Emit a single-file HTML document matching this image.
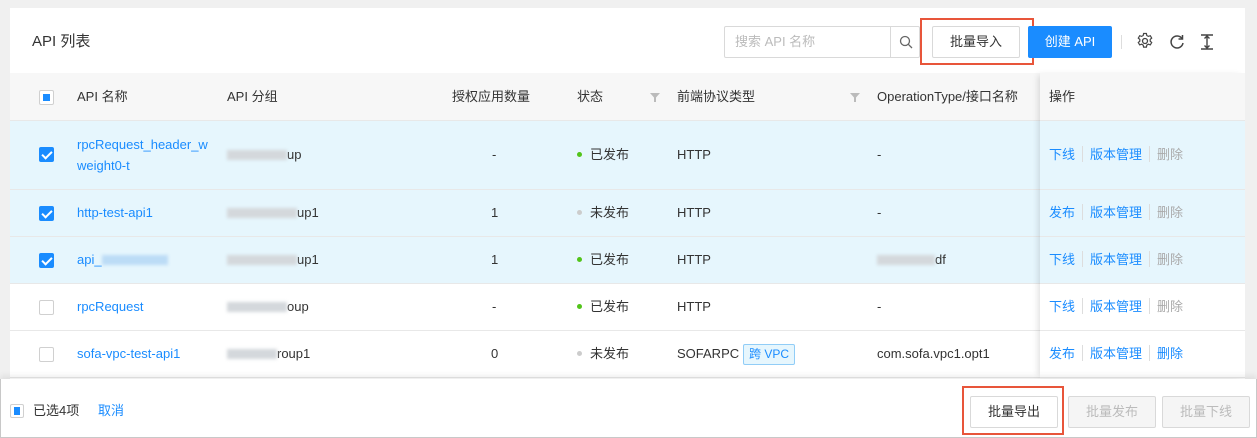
<!DOCTYPE html>
<html><head><meta charset="utf-8"><style>
*{box-sizing:border-box;margin:0;padding:0}
body{width:1257px;height:438px;overflow:hidden;background:#fff;font-family:"Liberation Sans","Noto Sans CJK SC",sans-serif;font-size:13px;color:#333;position:relative}
.frame{position:absolute;left:0;top:0;width:1257px;height:438px;border:1px solid #c8c8c8;border-top:none}
.a{position:absolute;white-space:nowrap;line-height:18px}
.row{position:absolute;left:10px;width:1235px;border-bottom:1px solid #e8e8e8}
.sel{background:#e6f6fd}
.cb{position:absolute;left:39px;width:15px;height:15px;border:1px solid #d0d0d0;border-radius:2px;background:#fff}
.cb.on{background:#1a8cff;border-color:#1a8cff}
.cb.on:after{content:"";position:absolute;left:4px;top:1px;width:4px;height:8px;border:solid #fff;border-width:0 2px 2px 0;transform:rotate(45deg)}
.lk{color:#1a8cff}
.blur{display:inline-block;height:10px;background:#d4d8dc;filter:blur(1.5px);vertical-align:-1px}
.dot{display:inline-block;width:5px;height:5px;border-radius:50%;margin-right:8px;vertical-align:2px}
.g{background:#52c41a}.gr{background:#ccc}
.sep{display:inline-block;width:1px;height:16px;background:#ddd;margin:0 7px;vertical-align:-3px}
.dis{color:#aaa}
.btn{position:absolute;height:32px;border:1px solid #d9d9d9;border-radius:2px;background:#fff;text-align:center;line-height:30px;font-size:13px}
</style></head><body>
<div class="frame"></div>
<div class="a" style="left:0;top:0;width:1257px;height:8px;background:#f0f0f0"></div>
<div class="a" style="left:0;top:0;width:10px;height:438px;background:#f0f0f0"></div>
<div class="a" style="left:1245px;top:0;width:12px;height:438px;background:#f0f0f0"></div>
<div class="a" style="left:10px;top:8px;width:1235px;height:430px;background:#fff"></div>

<div class="a" style="left:32px;top:33px;font-size:15px;color:#333">API 列表</div>
<div class="a" style="left:724px;top:26px;width:196px;height:32px;border:1px solid #d9d9d9;border-radius:2px"></div>
<div class="a" style="left:735px;top:33px;color:#bbb">搜索 API 名称</div>
<div class="a" style="left:890px;top:27px;width:1px;height:30px;background:#d9d9d9"></div>
<svg class="a" style="left:898px;top:34px" width="16" height="16" viewBox="0 0 16 16"><circle cx="7" cy="7" r="4.5" fill="none" stroke="#666" stroke-width="1.3"/><path d="M10.3 10.3L14 14" stroke="#666" stroke-width="1.3"/></svg>
<div class="btn" style="left:932px;top:26px;width:88px">批量导入</div>
<div class="a" style="left:920px;top:18px;width:114px;height:47px;border:2px solid #e8553a"></div>
<div class="btn" style="left:1028px;top:26px;width:84px;background:#1a8cff;border-color:#1a8cff;color:#fff">创建 API</div>
<div class="a" style="left:1121px;top:35px;width:1px;height:14px;background:#ddd"></div>
<svg class="a" style="left:1136px;top:32px" width="18" height="18" viewBox="0 0 18 18"><circle cx="9" cy="9" r="2.5" fill="none" stroke="#444" stroke-width="1.3"/><path d="M7.6 1.5h2.8l.4 2 1.6.9 1.9-.7 1.4 2.4-1.5 1.3v1.8l1.5 1.3-1.4 2.4-1.9-.7-1.6.9-.4 2H7.6l-.4-2-1.6-.9-1.9.7-1.4-2.4 1.5-1.3V7.4L2.3 6.1l1.4-2.4 1.9.7 1.6-.9z" fill="none" stroke="#444" stroke-width="1.2"/></svg>
<svg class="a" style="left:1168px;top:33px" width="18" height="18" viewBox="0 0 18 18"><path d="M14 5.5A6 6 0 1 0 15 10" fill="none" stroke="#444" stroke-width="1.5"/><path d="M14.5 2v4h-4" fill="none" stroke="#444" stroke-width="1.5"/></svg>
<svg class="a" style="left:1199px;top:33px" width="16" height="18" viewBox="0 0 16 18"><path d="M2 2h12M2 16h12M8 3v12M5.5 5.5L8 3l2.5 2.5M5.5 12.5L8 15l2.5-2.5" fill="none" stroke="#444" stroke-width="1.4"/></svg>

<!-- header -->
<div class="row" style="top:73px;height:48px;background:#f7f7f7"></div>
<div class="cb on" style="top:90px;background:#fff;border-color:#d0d0d0"></div>
<div class="a" style="left:43px;top:94px;width:7px;height:7px;background:#1a8cff"></div>
<div class="a" style="left:77px;top:88px">API 名称</div>
<div class="a" style="left:227px;top:88px">API 分组</div>
<div class="a" style="left:452px;top:88px">授权应用数量</div>
<div class="a" style="left:577px;top:88px">状态</div>
<svg class="a" style="left:649px;top:91px" width="12" height="12" viewBox="0 0 12 12"><path d="M1 2h10L7 6.5V11H5V6.5z" fill="#bbb"/></svg>
<div class="a" style="left:677px;top:88px">前端协议类型</div>
<svg class="a" style="left:849px;top:91px" width="12" height="12" viewBox="0 0 12 12"><path d="M1 2h10L7 6.5V11H5V6.5z" fill="#bbb"/></svg>
<div class="a" style="left:877px;top:88px">OperationType/接口名称</div>

<!-- rows -->
<div class="row sel" style="top:121px;height:69px"></div>
<div class="cb on" style="top:147px"></div>
<div class="a lk" style="left:77px;top:134px;line-height:21px">rpcRequest_header_w<br>weight0-t</div>
<div class="a" style="left:227px;top:146px"><span class="blur" style="width:60px"></span>up</div>
<div class="a" style="left:492px;top:146px">-</div>
<div class="a" style="left:577px;top:146px"><span class="dot g"></span>已发布</div>
<div class="a" style="left:677px;top:146px">HTTP</div>
<div class="a" style="left:877px;top:146px">-</div>

<div class="row sel" style="top:190px;height:47px"></div>
<div class="cb on" style="top:206px"></div>
<div class="a lk" style="left:77px;top:204px">http-test-api1</div>
<div class="a" style="left:227px;top:204px"><span class="blur" style="width:70px"></span>up1</div>
<div class="a" style="left:491px;top:204px">1</div>
<div class="a" style="left:577px;top:204px"><span class="dot gr"></span>未发布</div>
<div class="a" style="left:677px;top:204px">HTTP</div>
<div class="a" style="left:877px;top:204px">-</div>

<div class="row sel" style="top:237px;height:47px"></div>
<div class="cb on" style="top:253px"></div>
<div class="a lk" style="left:77px;top:251px">api_<span class="blur" style="width:66px;background:#bcdcf6"></span></div>
<div class="a" style="left:227px;top:251px"><span class="blur" style="width:70px"></span>up1</div>
<div class="a" style="left:491px;top:251px">1</div>
<div class="a" style="left:577px;top:251px"><span class="dot g"></span>已发布</div>
<div class="a" style="left:677px;top:251px">HTTP</div>
<div class="a" style="left:877px;top:251px"><span class="blur" style="width:58px"></span>df</div>

<div class="row" style="top:284px;height:47px"></div>
<div class="cb" style="top:300px"></div>
<div class="a lk" style="left:77px;top:298px">rpcRequest</div>
<div class="a" style="left:227px;top:298px"><span class="blur" style="width:60px"></span>oup</div>
<div class="a" style="left:492px;top:298px">-</div>
<div class="a" style="left:577px;top:298px"><span class="dot g"></span>已发布</div>
<div class="a" style="left:677px;top:298px">HTTP</div>
<div class="a" style="left:877px;top:298px">-</div>

<div class="row" style="top:331px;height:47px"></div>
<div class="cb" style="top:347px"></div>
<div class="a lk" style="left:77px;top:345px">sofa-vpc-test-api1</div>
<div class="a" style="left:227px;top:345px"><span class="blur" style="width:50px"></span>roup1</div>
<div class="a" style="left:491px;top:345px">0</div>
<div class="a" style="left:577px;top:345px"><span class="dot gr"></span>未发布</div>
<div class="a" style="left:677px;top:345px">SOFARPC</div>
<div class="a" style="left:743px;top:344px;height:21px;padding:0 5px;border:1px solid #91cdf7;background:#e6f6fd;color:#1a8cff;font-size:12px;line-height:19px;border-radius:2px">跨 VPC</div>
<div class="a" style="left:877px;top:345px">com.sofa.vpc1.opt1</div>

<!-- fixed column -->
<div class="a" style="left:1040px;top:73px;width:205px;height:305px;box-shadow:-4px 0 6px -2px rgba(0,0,0,.12)"></div>
<div class="a" style="left:1040px;top:73px;width:205px;height:48px;background:#f7f7f7;border-bottom:1px solid #e8e8e8"></div>
<div class="a" style="left:1049px;top:88px">操作</div>
<div class="a" style="left:1040px;top:121px;width:205px;height:69px;background:#e6f6fd;border-bottom:1px solid #e8e8e8"></div>
<div class="a" style="left:1040px;top:190px;width:205px;height:47px;background:#e6f6fd;border-bottom:1px solid #e8e8e8"></div>
<div class="a" style="left:1040px;top:237px;width:205px;height:47px;background:#e6f6fd;border-bottom:1px solid #e8e8e8"></div>
<div class="a" style="left:1040px;top:284px;width:205px;height:47px;background:#fff;border-bottom:1px solid #e8e8e8"></div>
<div class="a" style="left:1040px;top:331px;width:205px;height:47px;background:#fff;border-bottom:1px solid #e8e8e8"></div>
<div class="a" style="left:1049px;top:146px"><span class="lk">下线</span><span class="sep"></span><span class="lk">版本管理</span><span class="sep"></span><span class="dis">删除</span></div>
<div class="a" style="left:1049px;top:204px"><span class="lk">发布</span><span class="sep"></span><span class="lk">版本管理</span><span class="sep"></span><span class="dis">删除</span></div>
<div class="a" style="left:1049px;top:251px"><span class="lk">下线</span><span class="sep"></span><span class="lk">版本管理</span><span class="sep"></span><span class="dis">删除</span></div>
<div class="a" style="left:1049px;top:298px"><span class="lk">下线</span><span class="sep"></span><span class="lk">版本管理</span><span class="sep"></span><span class="dis">删除</span></div>
<div class="a" style="left:1049px;top:345px"><span class="lk">发布</span><span class="sep"></span><span class="lk">版本管理</span><span class="sep"></span><span class="lk">删除</span></div>

<!-- footer -->
<div class="a" style="left:0;top:379px;width:1257px;height:59px;background:#fff;box-shadow:0 -3px 6px rgba(0,0,0,.08);border-left:1px solid #c8c8c8;border-right:1px solid #c8c8c8;border-bottom:1px solid #c8c8c8"></div>
<div class="a" style="left:10px;top:404px;width:14px;height:14px;border:1px solid #d0d0d0;border-radius:2px"></div>
<div class="a" style="left:14px;top:407px;width:6px;height:8px;background:#1a8cff"></div>
<div class="a" style="left:33px;top:402px">已选4项</div>
<div class="a lk" style="left:98px;top:402px">取消</div>
<div class="btn" style="left:970px;top:396px;width:88px">批量导出</div>
<div class="a" style="left:962px;top:386px;width:102px;height:49px;border:2px solid #e8553a"></div>
<div class="btn" style="left:1068px;top:396px;width:88px;background:#f5f5f5;color:#bbb">批量发布</div>
<div class="btn" style="left:1162px;top:396px;width:88px;background:#f5f5f5;color:#bbb">批量下线</div>
</body></html>
